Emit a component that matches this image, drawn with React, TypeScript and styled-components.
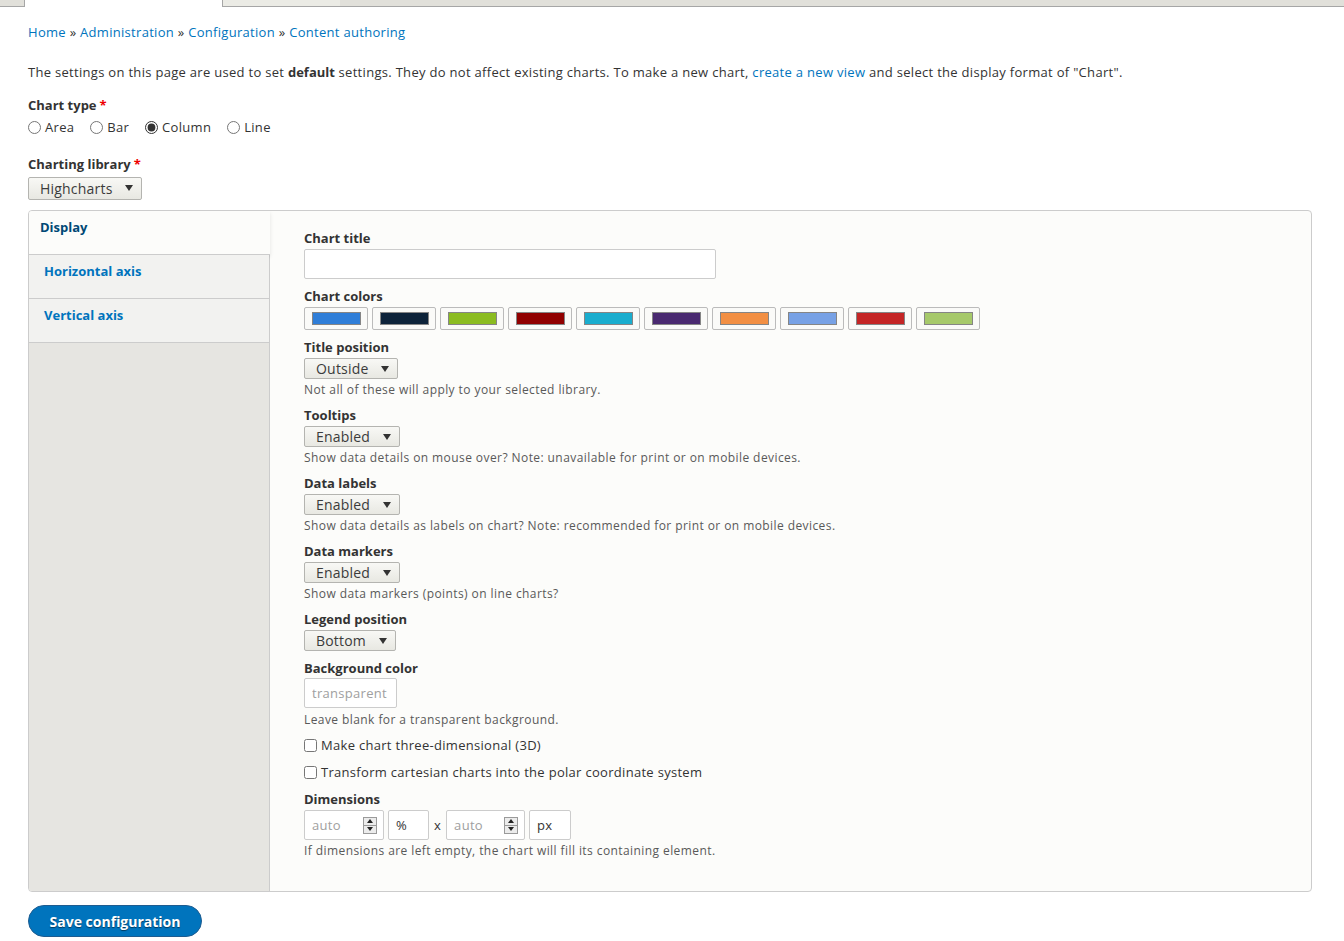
import React from 'react';
import styled, { createGlobalStyle } from 'styled-components';

const GlobalStyle = createGlobalStyle`
  body {
    margin: 0;
    background: #fff;
    color: #333;
    font-family: "Open Sans", "DejaVu Sans", sans-serif;
    font-size: 13px;
    line-height: 18px;
    letter-spacing: 0.3px;
  }
  * { box-sizing: border-box; }
`;

const palette = ['#2f7ed8', '#0d233a', '#8bbc21', '#910000', '#1aadce', '#492970', '#f28f43', '#77a1e5', '#c42525', '#a6c96a'];

/* top tab strip */
const TabStrip = styled.div`
  display: flex;
  height: 7px;
`;

const StripTab = styled.div<{ $w?: number; $tone: 'dark' | 'light' | 'active' }>`
  ${p => (p.$w ? `width: ${p.$w}px;` : 'flex: 1;')}
  background: ${p => (p.$tone === 'active' ? '#fff' : p.$tone === 'light' ? '#ebebe5' : '#e1e0da')};
  border-bottom: ${p => (p.$tone === 'active' ? 'none' : '1px solid #a6a6a6')};
  border-right: ${p => (p.$tone === 'dark' && p.$w ? '1px solid #a6a6a6' : 'none')};
  border-left: ${p => (p.$tone === 'light' ? '1px solid #a6a6a6' : 'none')};
`;

const Page = styled.div`
  padding: 16px 32px 0 28px;
`;

const Breadcrumb = styled.nav`
  color: #333;
  a { color: #0074bd; text-decoration: none; }
`;

const Intro = styled.p`
  margin: 22px 0 0;
  a { color: #0074bd; text-decoration: none; }
  b { letter-spacing: 0; }
`;

const Label = styled.div<{ $gap?: number }>`
  font-weight: bold;
  letter-spacing: 0;
  margin-top: ${p => p.$gap ?? 0}px;
`;

const Required = styled.span`
  color: #e00;
  margin-left: 3px;
`;

const RadioRow = styled.div`
  display: flex;
  gap: 16px;
  margin-top: 4px;
`;

const Choice = styled.label`
  display: inline-flex;
  align-items: center;
  gap: 4px;
  input { margin: 0; width: 13px; height: 13px; accent-color: #333; }
`;

const SelectWrap = styled.div<{ $gap?: number }>`
  position: relative;
  display: inline-block;
  margin-top: ${p => p.$gap ?? 2}px;
  select {
    appearance: none;
    height: 21px;
    padding: 0 28px 0 11px;
    border: 1px solid #b4b4b0;
    border-radius: 2px;
    background: linear-gradient(#f8f8f5, #e8e8e2);
    font-family: inherit;
    font-size: 14px;
    letter-spacing: 0.2px;
    color: #3b3b3b;
  }
  &::after {
    content: '';
    position: absolute;
    right: 9px;
    top: 8px;
    border-left: 4px solid transparent;
    border-right: 4px solid transparent;
    border-top: 6px solid #333;
    pointer-events: none;
  }
`;

const Select: React.FC<{ value: string; gap?: number; tall?: boolean }> = props => (
  <div>
    <SelectWrap $gap={props.gap}>
      <select defaultValue={props.value} style={props.tall ? { height: 23 } : undefined}>
        <option>{props.value}</option>
      </select>
    </SelectWrap>
  </div>
);

/* vertical tabs */
const TabsBox = styled.div`
  display: flex;
  margin-top: 10px;
  border: 1px solid #ccc;
  border-radius: 4px;
  background: #fcfcfa;
  overflow: hidden;
`;

const Menu = styled.ul`
  list-style: none;
  margin: 0;
  padding: 0;
  width: 241px;
  flex: none;
  background: #e6e5e1;
  border-right: 1px solid #ccc;
`;

const MenuItem = styled.li<{ $selected?: boolean }>`
  position: relative;
  height: 44px;
  padding: 7px 0 0 ${p => (p.$selected ? 11 : 15)}px;
  font-weight: bold;
  letter-spacing: 0;
  color: ${p => (p.$selected ? '#004875' : '#0074bd')};
  background: ${p => (p.$selected ? '#fcfcfa' : '#f2f2f0')};
  border-bottom: 1px solid #ccc;
  margin-right: ${p => (p.$selected ? -1 : 0)}px;
  box-shadow: ${p => (p.$selected ? '0 2px 4px rgba(0,0,0,0.1)' : 'none')};
`;

const Pane = styled.div`
  flex: 1;
  padding: 18px 34px 32px;
`;

const TextInput = styled.input<{ $w: number; $gap?: number }>`
  display: block;
  width: ${p => p.$w}px;
  height: 30px;
  margin-top: ${p => p.$gap ?? 2}px;
  padding: 0 7px;
  border: 1px solid #ccc;
  border-radius: 2px;
  background: #fff;
  font-family: inherit;
  font-size: 13px;
  letter-spacing: 0.3px;
  color: #333;
  &::placeholder { color: #a0a0a0; }
`;

const Swatches = styled.div`
  display: flex;
  gap: 4px;
  margin-top: 2px;
`;

const Swatch = styled.div`
  width: 64px;
  height: 23px;
  display: flex;
  align-items: center;
  justify-content: center;
  border: 1px solid #bbb;
  border-radius: 2px;
  background: #fafaf8;
`;

const SwatchFill = styled.span<{ $color: string }>`
  width: 49px;
  height: 13px;
  background: ${p => p.$color};
  border: 1px solid #858585;
`;

const Description = styled.div<{ $gap?: number }>`
  margin-top: ${p => p.$gap ?? 3}px;
  font-size: 12px;
  line-height: 16px;
  letter-spacing: 0.42px;
  color: #595959;
`;

const CheckRow = styled.label<{ $gap: number }>`
  display: flex;
  align-items: center;
  margin-top: ${p => p.$gap}px;
  input { margin: 0 4px 0 0; width: 13px; height: 13px; }
`;

const DimRow = styled.div`
  display: flex;
  align-items: center;
  gap: 4px;
  margin-top: 2px;
`;

const NumberBox = styled.div<{ $w: number }>`
  width: ${p => p.$w}px;
  height: 30px;
  display: flex;
  align-items: center;
  justify-content: space-between;
  padding: 0 6px 0 7px;
  border: 1px solid #ccc;
  border-radius: 2px;
  background: #fff;
  color: #a0a0a0;
`;

const UnitBox = styled.div<{ $w: number }>`
  width: ${p => p.$w}px;
  height: 30px;
  display: flex;
  align-items: center;
  padding: 0 7px;
  border: 1px solid #ccc;
  border-radius: 2px;
  background: #fff;
  color: #333;
`;

const Times = styled.span`
  padding: 0 1px;
`;

const Spinner = styled.span`
  display: flex;
  flex-direction: column;
  width: 14px;
  height: 17px;
  border: 1px solid #9a9a9a;
  background: #ececec;
`;

const SpinHalf = styled.span<{ $down?: boolean }>`
  flex: 1;
  display: flex;
  align-items: center;
  justify-content: center;
  border-top: ${p => (p.$down ? '1px solid #9a9a9a' : 'none')};
  &::before {
    content: '';
    border-left: 3px solid transparent;
    border-right: 3px solid transparent;
    ${p => (p.$down ? 'border-top: 4px solid #222;' : 'border-bottom: 4px solid #222;')}
  }
`;

const NumberField: React.FC<{ w: number }> = ({ w }) => (
  <NumberBox $w={w}>
    <span>auto</span>
    <Spinner>
      <SpinHalf />
      <SpinHalf $down />
    </Spinner>
  </NumberBox>
);

const SaveButton = styled.button`
  display: block;
  margin-top: 13px;
  width: 174px;
  height: 32px;
  border: 1px solid #1e5c90;
  border-radius: 20px;
  background: #0074bd;
  color: #fff;
  font-family: inherit;
  font-size: 14px;
  font-weight: bold;
  letter-spacing: 0;
  text-shadow: 0 1px 1px rgba(0, 0, 0, 0.5);
`;

export default function App() {
  return (
    <>
      <GlobalStyle />
      <TabStrip>
        <StripTab $w={25} $tone="dark" />
        <StripTab $w={197} $tone="active" />
        <StripTab $w={118} $tone="light" />
        <StripTab $tone="dark" />
      </TabStrip>
      <Page>
        <Breadcrumb>
          <a href="#">Home</a> » <a href="#">Administration</a> » <a href="#">Configuration</a> »{' '}
          <a href="#">Content authoring</a>
        </Breadcrumb>
        <Intro>
          The settings on this page are used to set <b>default</b> settings. They do not affect existing charts. To
          make a new chart, <a href="#">create a new view</a> and select the display format of "Chart".
        </Intro>

        <Label $gap={15}>
          Chart type<Required>*</Required>
        </Label>
        <RadioRow>
          <Choice><input type="radio" name="type" />Area</Choice>
          <Choice><input type="radio" name="type" />Bar</Choice>
          <Choice><input type="radio" name="type" defaultChecked />Column</Choice>
          <Choice><input type="radio" name="type" />Line</Choice>
        </RadioRow>

        <Label $gap={19}>
          Charting library<Required>*</Required>
        </Label>
        <Select value="Highcharts" gap={4} tall />

        <TabsBox>
          <Menu>
            <MenuItem $selected>Display</MenuItem>
            <MenuItem>Horizontal axis</MenuItem>
            <MenuItem>Vertical axis</MenuItem>
          </Menu>
          <Pane>
            <Label>Chart title</Label>
            <TextInput $w={412} />

            <Label $gap={8}>Chart colors</Label>
            <Swatches>
              {palette.map(c => (
                <Swatch key={c}>
                  <SwatchFill $color={c} />
                </Swatch>
              ))}
            </Swatches>

            <Label $gap={8}>Title position</Label>
            <Select value="Outside" />
            <Description>Not all of these will apply to your selected library.</Description>

            <Label $gap={8}>Tooltips</Label>
            <Select value="Enabled" />
            <Description>Show data details on mouse over? Note: unavailable for print or on mobile devices.</Description>

            <Label $gap={8}>Data labels</Label>
            <Select value="Enabled" />
            <Description>Show data details as labels on chart? Note: recommended for print or on mobile devices.</Description>

            <Label $gap={8}>Data markers</Label>
            <Select value="Enabled" />
            <Description>Show data markers (points) on line charts?</Description>

            <Label $gap={8}>Legend position</Label>
            <Select value="Bottom" />

            <Label $gap={8}>Background color</Label>
            <TextInput $w={93} $gap={1} placeholder="transparent" />
            <Description $gap={4}>Leave blank for a transparent background.</Description>

            <CheckRow $gap={8}>
              <input type="checkbox" />
              Make chart three-dimensional (3D)
            </CheckRow>
            <CheckRow $gap={9}>
              <input type="checkbox" />
              Transform cartesian charts into the polar coordinate system
            </CheckRow>

            <Label $gap={9}>Dimensions</Label>
            <DimRow>
              <NumberField w={80} />
              <UnitBox $w={41}>%</UnitBox>
              <Times>x</Times>
              <NumberField w={79} />
              <UnitBox $w={42}>px</UnitBox>
            </DimRow>
            <Description>If dimensions are left empty, the chart will fill its containing element.</Description>
          </Pane>
        </TabsBox>

        <SaveButton>Save configuration</SaveButton>
      </Page>
    </>
  );
}
